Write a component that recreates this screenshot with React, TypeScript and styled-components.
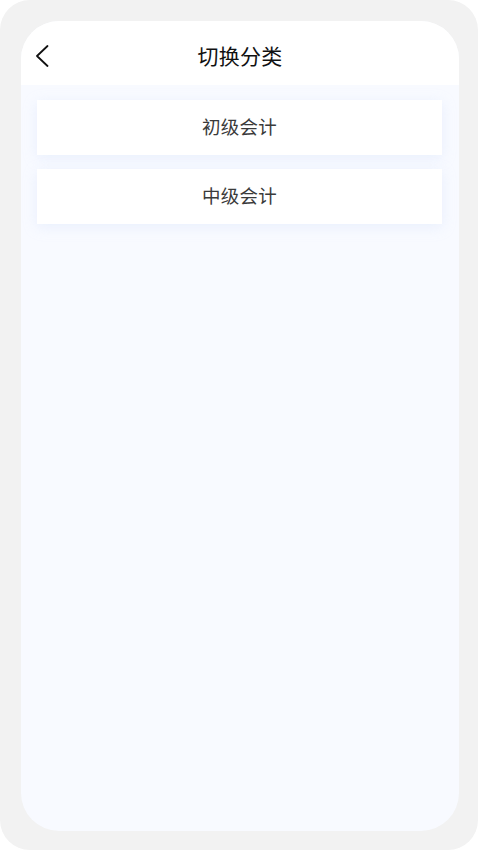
import React from 'react';
import styled, { createGlobalStyle } from 'styled-components';

const GlobalStyle = createGlobalStyle`
	html, body {
		margin: 0;
		padding: 0;
		background: #ffffff;
	}
	* {
		box-sizing: border-box;
	}
`;

const Frame = styled.div`
	width: 478px;
	height: 850px;
	padding: 21px 19px 19px 21px;
	background: #f2f2f2;
	border-radius: 30px;
`;

const Screen = styled.div`
	height: 100%;
	display: flex;
	flex-direction: column;
	background: #f8faff;
	border-radius: 38px;
	overflow: hidden;
	font-family: 'Noto Sans CJK SC', 'Noto Sans', sans-serif;
`;

const Header = styled.header`
	height: 64px;
	flex-shrink: 0;
	display: grid;
	grid-template-columns: 1fr auto 1fr;
	align-items: center;
	padding: 0 14px;
	background: #ffffff;
`;

const BackButton = styled.button`
	justify-self: start;
	display: flex;
	align-items: center;
	padding: 0;
	margin-top: 6px;
	border: none;
	background: none;
	cursor: pointer;
`;

const Title = styled.h1`
	margin: 4px 0 0;
	font-size: 21px;
	font-weight: 400;
	color: #111111;
	letter-spacing: 0.2px;
`;

const List = styled.div`
	display: flex;
	flex-direction: column;
	gap: 14px;
	padding: 15px 17px 0 16px;
`;

const CategoryItem = styled.div`
	height: 55px;
	display: flex;
	align-items: center;
	justify-content: center;
	padding-bottom: 4px;
	background: #ffffff;
	box-shadow: 0 3px 12px rgba(205, 220, 250, 0.35);
	font-size: 18.5px;
	letter-spacing: 0.2px;
	color: #3a3a3a;
	cursor: pointer;
`;

const categories = ['初级会计', '中级会计'];

function App() {
	return (
		<>
			<GlobalStyle />
			<Frame>
				<Screen>
					<Header>
						<BackButton aria-label="返回">
							<svg width="14" height="22" viewBox="0 0 14 22" fill="none">
								<path d="M12.5 1 L2 11 L12.5 21" stroke="#111" strokeWidth="1.8" strokeLinecap="round" strokeLinejoin="round" />
							</svg>
						</BackButton>
						<Title>切换分类</Title>
						<span />
					</Header>
					<List>
						{categories.map((name) => (
							<CategoryItem key={name}>{name}</CategoryItem>
						))}
					</List>
				</Screen>
			</Frame>
		</>
	);
}

export default App;
